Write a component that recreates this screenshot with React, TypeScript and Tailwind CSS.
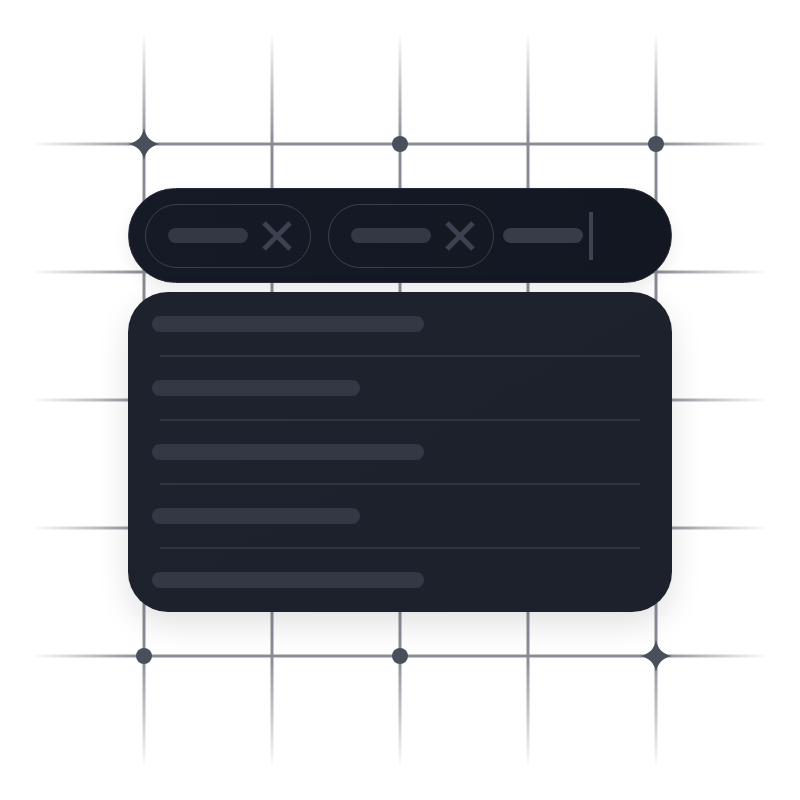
import React from "react";

const XIcon = () => (
  <svg width="32" height="32" viewBox="0 0 32 32" className="shrink-0">
    <path d="M3 3 L29 29 M29 3 L3 29" stroke="#3c4250" strokeWidth="5" strokeLinecap="butt" />
  </svg>
);

const Tag = () => (
  <div className="flex items-center h-[64px] w-[166px] rounded-full border-[1.5px] border-[#3a404d] pl-[22px] gap-[13px] shrink-0">
    <div className="h-[15px] w-[80px] rounded-full bg-[#333844]" />
    <XIcon />
  </div>
);

const Sparkle = ({ x, y }: { x: number; y: number }) => (
  <path
    transform={`translate(${x} ${y})`}
    d="M0 -16 Q2.5 -2.5 16 0 Q2.5 2.5 0 16 Q-2.5 2.5 -16 0 Q-2.5 -2.5 0 -16 Z"
    fill="#4a4f5b"
  />
);

const Grid = () => {
  const pos = [144, 272, 400, 528, 656];
  return (
    <svg width="800" height="800" viewBox="0 0 800 800" className="absolute inset-0">
      <defs>
        <linearGradient id="gv" x1="0" y1="32" x2="0" y2="768" gradientUnits="userSpaceOnUse">
          <stop offset="0" stopColor="#8a8d96" stopOpacity="0" />
          <stop offset="0.15" stopColor="#8a8d96" stopOpacity="1" />
          <stop offset="0.85" stopColor="#8a8d96" stopOpacity="1" />
          <stop offset="1" stopColor="#8a8d96" stopOpacity="0" />
        </linearGradient>
        <linearGradient id="gh" x1="32" y1="0" x2="768" y2="0" gradientUnits="userSpaceOnUse">
          <stop offset="0" stopColor="#8a8d96" stopOpacity="0" />
          <stop offset="0.15" stopColor="#8a8d96" stopOpacity="1" />
          <stop offset="0.85" stopColor="#8a8d96" stopOpacity="1" />
          <stop offset="1" stopColor="#8a8d96" stopOpacity="0" />
        </linearGradient>
      </defs>
      {pos.map((p) => (
        <rect key={"v" + p} x={p - 1.5} y={32} width={3} height={736} fill="url(#gv)" />
      ))}
      {pos.map((p) => (
        <rect key={"h" + p} x={32} y={p - 1.5} width={736} height={3} fill="url(#gh)" />
      ))}
      <circle cx={400} cy={144} r={8} fill="#4a4f5b" />
      <circle cx={656} cy={144} r={8} fill="#4a4f5b" />
      <circle cx={144} cy={656} r={8} fill="#4a4f5b" />
      <circle cx={400} cy={656} r={8} fill="#4a4f5b" />
      <Sparkle x={144} y={144} />
      <Sparkle x={656} y={656} />
    </svg>
  );
};

const Row = ({ w, last }: { w: number; last?: boolean }) => (
  <>
    <div className={w === 272 ? "h-[16px] w-[272px] rounded-full bg-[#323844]" : "h-[16px] w-[208px] rounded-full bg-[#323844]"} />
    {!last && <div className="h-[1.5px] mt-[23px] mb-[23.5px] ml-[8px] mr-[8px] bg-[#2f3541]" />}
  </>
);

export default function App() {
  return (
    <div className="relative w-[800px] h-[800px] bg-white overflow-hidden" style={{ fontFamily: "Inter, sans-serif" }}>
      <Grid />
      <div className="relative flex flex-col gap-[9px] pt-[188px] pl-[128px] w-[672px]">
        <div className="flex items-center h-[95px] rounded-full border border-[#272c38] bg-gradient-to-r from-[#161a26] to-[#131722] pl-[16px] shadow-[0_6px_16px_rgba(0,0,0,0.08)]">
          <Tag />
          <div className="w-[17px]" />
          <Tag />
          <div className="h-[15px] w-[80px] rounded-full bg-[#363c48] ml-[9px]" />
          <div className="h-[48px] w-[3.5px] bg-[#3d4350] ml-[6px]" />
        </div>
        <div className="flex flex-col h-[320px] rounded-[40px] bg-gradient-to-br from-[#1e222d] to-[#1c212b] pt-[24px] px-[24px] shadow-[0_12px_32px_rgba(0,0,0,0.12)]">
          <Row w={272} />
          <Row w={208} />
          <Row w={272} />
          <Row w={208} />
          <Row w={272} last />
        </div>
      </div>
    </div>
  );
}
